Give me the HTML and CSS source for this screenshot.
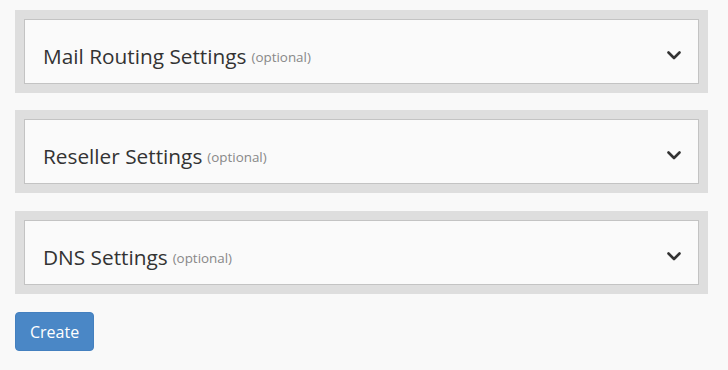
FILE: index.html
```html
<!DOCTYPE html>
<html>
<head>
<meta charset="utf-8">
<link rel="stylesheet" href="styles.css">
</head>
<body>
<div class="page">
  <div class="panel">
    <div class="panel-head">
      <span class="title">Mail Routing Settings</span>
      <span class="opt">(optional)</span>
      <svg class="chev" width="14" height="9" viewBox="0 0 14 9"><path d="M1.5 1.5 L7 7 L12.5 1.5" fill="none" stroke="#333" stroke-width="2.6" stroke-linecap="round" stroke-linejoin="round"/></svg>
    </div>
  </div>
  <div class="panel">
    <div class="panel-head">
      <span class="title">Reseller Settings</span>
      <span class="opt">(optional)</span>
      <svg class="chev" width="14" height="9" viewBox="0 0 14 9"><path d="M1.5 1.5 L7 7 L12.5 1.5" fill="none" stroke="#333" stroke-width="2.6" stroke-linecap="round" stroke-linejoin="round"/></svg>
    </div>
  </div>
  <div class="panel">
    <div class="panel-head">
      <span class="title">DNS Settings</span>
      <span class="opt">(optional)</span>
      <svg class="chev" width="14" height="9" viewBox="0 0 14 9"><path d="M1.5 1.5 L7 7 L12.5 1.5" fill="none" stroke="#333" stroke-width="2.6" stroke-linecap="round" stroke-linejoin="round"/></svg>
    </div>
  </div>
  <button class="btn">Create</button>
</div>
</body>
</html>
```
FILE: styles.css
```css
html, body {
  margin: 0;
  padding: 0;
  background: #f9f9f9;
}
body {
  font-family: "Open Sans", "Liberation Sans", sans-serif;
  color: #333;
}
.page {
  padding: 10px 20px 0 15px;
  display: flex;
  flex-direction: column;
  align-items: flex-start;
}
.panel {
  align-self: stretch;
  background: #dedede;
  padding: 9px;
  margin-bottom: 17px;
}
.panel:nth-child(2) {
  margin-bottom: 18px;
}
.panel-head {
  background: #fafafa;
  border: 1px solid #c3c3c3;
  height: 55px;
  display: flex;
  align-items: center;
  padding: 8px 17px 0 18px;
  box-sizing: content-box;
}
.title {
  font-size: 20.8px;
  color: #333;
}
.opt {
  font-size: 13.4px;
  color: #888;
  margin-left: 5px;
  margin-top: 3px;
}
.chev {
  margin-left: auto;
  display: block;
}
.btn {
  margin-top: 1px;
  font-family: "Open Sans", "Liberation Sans", sans-serif;
  font-size: 16px;
  color: #fff;
  background: #4a87c6;
  border: 1px solid #4480bf;
  border-radius: 4px;
  height: 39px;
  padding: 0 14px;
  cursor: pointer;
}
```
